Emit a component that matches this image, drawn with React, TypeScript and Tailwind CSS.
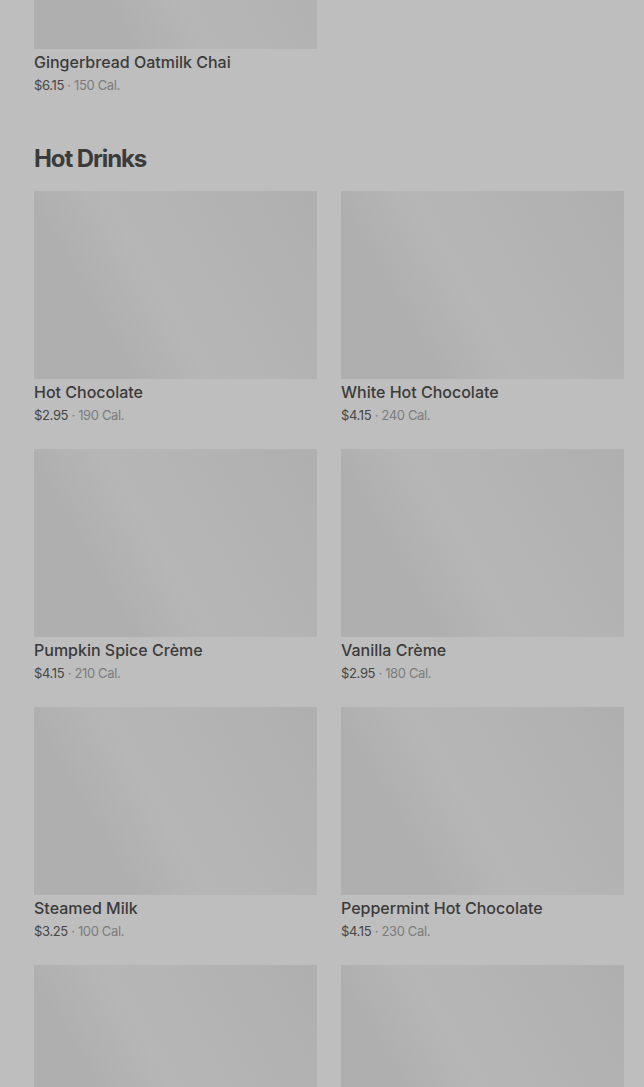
import React from "react";

type Item = { name: string; price: string; cal: string };

const hotDrinks: Item[] = [
  { name: "Hot Chocolate", price: "$2.95", cal: "190 Cal." },
  { name: "White Hot Chocolate", price: "$4.15", cal: "240 Cal." },
  { name: "Pumpkin Spice Crème", price: "$4.15", cal: "210 Cal." },
  { name: "Vanilla Crème", price: "$2.95", cal: "180 Cal." },
  { name: "Steamed Milk", price: "$3.25", cal: "100 Cal." },
  { name: "Peppermint Hot Chocolate", price: "$4.15", cal: "230 Cal." },
  { name: "", price: "", cal: "" },
  { name: "", price: "", cal: "" },
];

function ItemCard({ item }: { item: Item }) {
  return (
    <div className="flex flex-col">
      {/* placeholder image while loading */}
      <div className="h-[188px] w-full bg-[linear-gradient(60deg,#afafaf_0%,#afafaf_25%,#b6b6b6_45%,#b3b3b3_70%,#afafaf_100%)]" />
      {item.name && (
        <div className="pt-[3px]">
          <p className="text-[16px] leading-5 font-medium text-[#3b3b3b]">{item.name}</p>
          <p className="mt-[3px] text-[13px] leading-5 tracking-[-0.35px] text-[#7c7c7c]">
            <span className="text-[#464646]">{item.price}</span> · {item.cal}
          </p>
        </div>
      )}
    </div>
  );
}

export default function App() {
  return (
    <div
      className="h-[1087px] w-full overflow-hidden bg-[#bebebe] pl-[34px] pr-[20px]"
      style={{ fontFamily: "Inter, 'Noto Sans', sans-serif" }}
    >
      {/* tail of the previous section */}
      <div className="-mt-[139px] grid grid-cols-2 gap-x-6">
        <ItemCard item={{ name: "Gingerbread Oatmilk Chai", price: "$6.15", cal: "150 Cal." }} />
      </div>

      <h2 className="mt-[48px] text-[24px] leading-8 font-bold tracking-[-1.1px] text-[#3b3b3b]">Hot Drinks</h2>

      <div className="mt-[16px] grid grid-cols-2 gap-x-6 gap-y-6">
        {hotDrinks.map((it, i) => (
          <ItemCard key={i} item={it} />
        ))}
      </div>
    </div>
  );
}
